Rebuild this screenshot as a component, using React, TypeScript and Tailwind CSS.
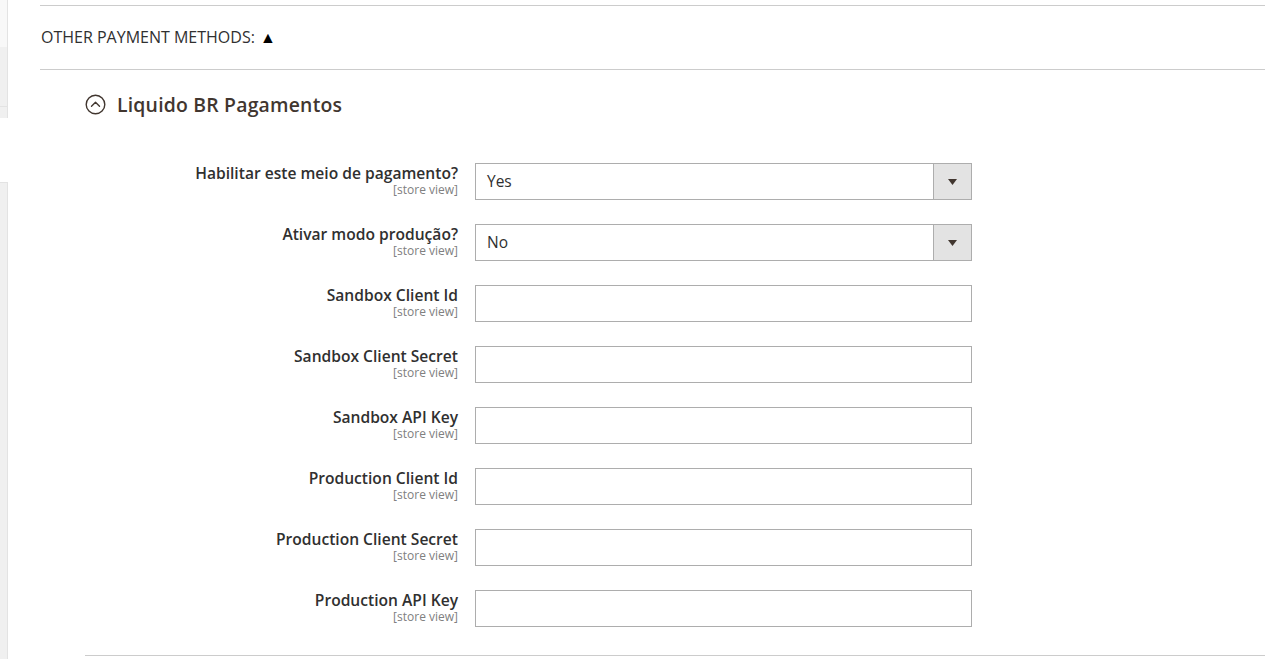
const fields: { label: string; type: "select" | "text"; value?: string }[] = [
  { label: "Habilitar este meio de pagamento?", type: "select", value: "Yes" },
  { label: "Ativar modo produção?", type: "select", value: "No" },
  { label: "Sandbox Client Id", type: "text" },
  { label: "Sandbox Client Secret", type: "text" },
  { label: "Sandbox API Key", type: "text" },
  { label: "Production Client Id", type: "text" },
  { label: "Production Client Secret", type: "text" },
  { label: "Production API Key", type: "text" },
];

export default function App() {
  return (
    <div
      className="flex h-[659px] w-[1280px] overflow-hidden bg-white text-[#303030]"
      style={{ fontFamily: '"Open Sans", "Liberation Sans", sans-serif' }}
    >
      {/* LEFT STRIP */}
      <div className="flex w-[8px] shrink-0 flex-col">
        <div className="h-[47px] border-r border-[#e3e3e3] bg-[#f8f8f8]" />
        <div className="h-[60px] border-r border-b border-[#e3e3e3] bg-[#f0f0f0]" />
        <div className="h-[11px] border-r border-[#e3e3e3] bg-[#f0f0f0]" />
        <div className="h-[64px]" />
        <div className="flex-1 border-r border-t border-[#e3e3e3] bg-[#f0f0f0]" />
      </div>

      {/* MAIN */}
      <div className="flex-1 pl-[32px] pr-[15px] pt-[5px]">
        <div className="border-y border-[#cccccc] flex h-[65px] items-center pb-[2px] pl-px text-[16px]">
          OTHER PAYMENT METHODS:<span className="ml-[5px] text-[16px] leading-none text-black">▲</span>
        </div>

        <div className="pl-[45px]">
          <div className="flex h-[70px] items-center gap-[11px] pb-[1px]">
            <svg width="21" height="21" viewBox="0 0 21 21" fill="none" stroke="#41362f" strokeWidth="1.4">
              <circle cx="10.5" cy="10.5" r="9.3" />
              <path d="M6.5 12.3 L10.5 8.3 L14.5 12.3" strokeLinecap="round" strokeLinejoin="round" />
            </svg>
            <span className="text-[19.4px] font-semibold tracking-[0.2px] text-[#41362f]">Liquido BR Pagamentos</span>
          </div>

          <div className="border-b border-[#cccccc] pt-[23px] pb-[28px]">
            <div className="flex flex-col gap-[24px]">
              {fields.map((f) => (
                <div key={f.label} className="flex items-start">
                  <div className="w-[373px] shrink-0 text-right">
                    <div className="text-[15.6px] font-semibold leading-[20px]">{f.label}</div>
                    <div className="text-[12px] leading-[13px] text-[#808080]">[store view]</div>
                  </div>
                  <div className="ml-[17px]">
                    {f.type === "select" ? (
                      <div className="flex h-[37px] w-[497px] border border-[#adadad] bg-white">
                        <div className="flex flex-1 items-center pl-[11px] text-[15.5px]">{f.value}</div>
                        <div className="flex w-[38px] items-center justify-center border-l border-[#adadad] bg-[#e3e3e3]">
                          <svg width="9" height="6" viewBox="0 0 9 6">
                            <path d="M0 0 H9 L4.5 6 Z" fill="#41362f" />
                          </svg>
                        </div>
                      </div>
                    ) : (
                      <div className="h-[37px] w-[497px] border border-[#adadad] bg-white" />
                    )}
                  </div>
                </div>
              ))}
            </div>
          </div>
        </div>
      </div>
    </div>
  );
}
